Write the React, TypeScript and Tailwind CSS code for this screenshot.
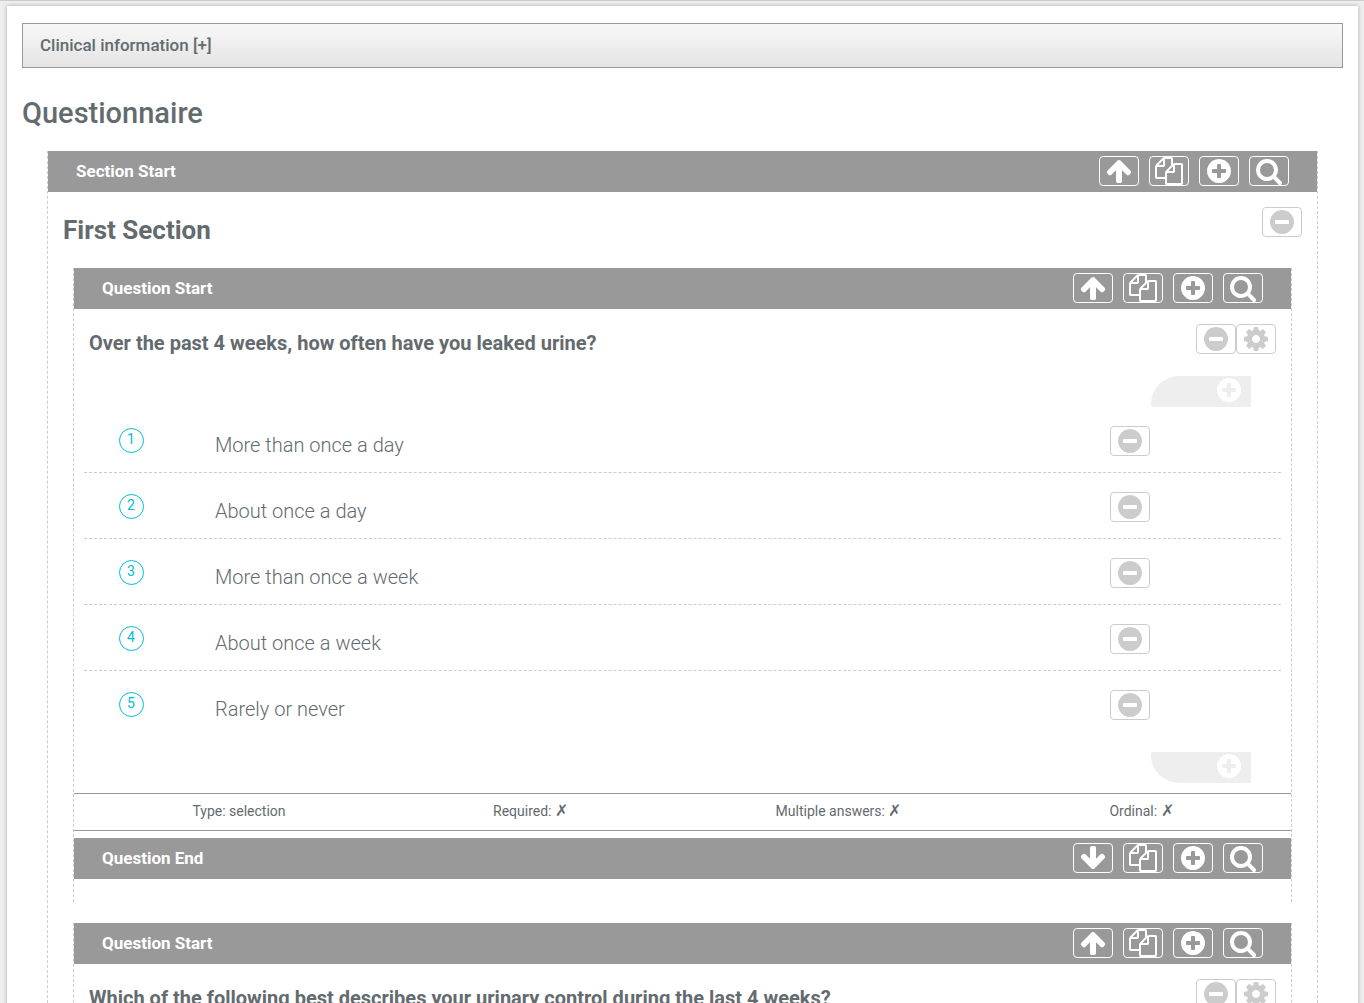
import type { ReactNode } from 'react'

const icons = {
  up: 'M1675 971q0 51-37 90l-75 75q-38 38-91 38-54 0-90-38l-294-293v704q0 52-37.5 84.5t-90.5 32.5h-128q-53 0-90.5-32.5t-37.5-84.5v-704l-294 293q-36 38-90 38t-90-38l-75-75q-38-38-38-90 0-53 38-91l651-651q35-37 90-37 54 0 91 37l651 651q37 39 37 91z',
  copy: 'M1696 384q40 0 68 28t28 68v1216q0 40-28 68t-68 28h-960q-40 0-68-28t-28-68v-288h-544q-40 0-68-28t-28-68v-672q0-40 20-88t48-76l408-408q28-28 76-48t88-20h416q40 0 68 28t28 68v328q68-40 128-40h416zm-544 213l-299 299h299v-299zm-640-384l-299 299h299v-299zm196 647l316-316v-416h-384v416q0 40-28 68t-68 28h-416v640h512v-256q0-40 20-88t48-76zm956 804v-1152h-384v416q0 40-28 68t-68 28h-416v640h896z',
  plus: 'M1344 960v-128q0-26-19-45t-45-19h-256v-256q0-26-19-45t-45-19h-128q-26 0-45 19t-19 45v256h-256q-26 0-45 19t-19 45v128q0 26 19 45t45 19h256v256q0 26 19 45t45 19h128q26 0 45-19t19-45v-256h256q26 0 45-19t19-45zm320-64q0 209-103 385.5t-279.5 279.5-385.5 103-385.5-103-279.5-279.5-103-385.5 103-385.5 279.5-279.5 385.5-103 385.5 103 279.5 279.5 103 385.5z',
  minus: 'M1344 960v-128q0-26-19-45t-45-19h-768q-26 0-45 19t-19 45v128q0 26 19 45t45 19h768q26 0 45-19t19-45zm320-64q0 209-103 385.5t-279.5 279.5-385.5 103-385.5-103-279.5-279.5-103-385.5 103-385.5 279.5-279.5 385.5-103 385.5 103 279.5 279.5 103 385.5z',
  search: 'M1216 832q0-185-131.5-316.5t-316.5-131.5-316.5 131.5-131.5 316.5 131.5 316.5 316.5 131.5 316.5-131.5 131.5-316.5zm512 832q0 52-38 90t-90 38q-54 0-90-38l-343-342q-179 124-399 124-143 0-273.5-55.5t-225-150-150-225-55.5-273.5 55.5-273.5 150-225 225-150 273.5-55.5 273.5 55.5 225 150 150 225 55.5 273.5q0 220-124 399l343 343q37 37 37 90z',
  cog: 'M1152 896q0-106-75-181t-181-75-181 75-75 181 75 181 181 75 181-75 75-181zm512-109v222q0 12-8 23t-20 13l-185 28q-19 54-39 91 35 50 107 138 10 12 10 25t-9 23q-27 37-99 108t-94 71q-12 0-26-9l-138-108q-44 23-91 38-16 136-29 186-7 28-36 28h-222q-14 0-24.5-8.5t-11.5-21.5l-28-184q-49-16-90-37l-141 107q-10 9-25 9-14 0-25-11-126-114-165-168-7-10-7-23 0-12 8-23 15-21 51-66.5t54-70.5q-27-50-41-99l-183-27q-13-2-21-12.5t-8-23.5v-222q0-12 8-23t19-13l186-28q14-46 39-92-40-57-107-138-10-12-10-24 0-10 9-23 26-36 98.5-107.5t94.5-71.5q13 0 26 10l138 107q44-23 91-38 16-136 29-186 7-28 36-28h222q14 0 24.5 8.5t11.5 21.5l28 184q49 16 90 37l142-107q9-9 24-9 13 0 25 10 129 119 165 170 7 8 7 22 0 12-8 23-15 21-51 66.5t-54 70.5q26 50 41 98l183 28q13 2 21 12.5t8 23.5z',
}

type IconName = keyof typeof icons

const Icon = ({ name, className = '' }: { name: IconName; className?: string }) => (
  <svg viewBox="0 0 1792 1792" fill="currentColor" aria-hidden="true" className={`size-7 shrink-0 ${className}`}>
    <path d={icons[name]} />
  </svg>
)

const IconButton = ({ name, label, flip }: { name: IconName; label: string; flip?: boolean }) => (
  <button
    type="button"
    aria-label={label}
    className="flex h-[30px] w-10 shrink-0 items-center justify-center rounded border border-current"
  >
    <Icon name={name} className={flip ? 'rotate-180' : ''} />
  </button>
)

function Bar({ title, end }: { title: string; end?: boolean }) {
  return (
    <div className="flex h-[41px] items-start justify-between bg-[#999] px-7 pt-[5px] text-white">
      <span className="text-[17px] leading-[30px] font-bold">{title}</span>
      <div className="flex gap-2.5">
        <IconButton name="up" label={end ? 'Move down' : 'Move up'} flip={end} />
        <IconButton name="copy" label="Copy" />
        <IconButton name="plus" label="Add" />
        <IconButton name="search" label="Search" />
      </div>
    </div>
  )
}

function AddTab({ bottom }: { bottom?: boolean }) {
  return (
    <div className="flex justify-end pr-10">
      <button
        type="button"
        aria-label="Add answer"
        className={`flex h-[31px] w-[100px] justify-end rounded-xs bg-[#eee] pr-2 text-white ${
          bottom ? 'rounded-bl-[28px]' : 'rounded-tl-[28px]'
        }`}
      >
        <Icon name="plus" />
      </button>
    </div>
  )
}

function Question({ text, children }: { text: string; children?: ReactNode }) {
  return (
    <section className="mx-[25px] border-x border-dashed border-[#ccc] pb-[23px]">
      <Bar title="Question Start" />
      <div className="flex items-start justify-between px-[15px] pt-[15px]">
        <h3 className="pt-[7px] text-xl leading-6 font-bold">{text}</h3>
        <div className="flex text-[#ccc]">
          <IconButton name="minus" label="Remove question" />
          <IconButton name="cog" label="Question settings" />
        </div>
      </div>
      {children}
    </section>
  )
}

const answers = [
  'More than once a day',
  'About once a day',
  'More than once a week',
  'About once a week',
  'Rarely or never',
]

const No = () => (
  <span aria-label="no" className="text-base leading-4">
    ✗
  </span>
)

export default function App() {
  return (
    <div className="h-screen overflow-hidden border-t border-[#ccc] bg-[#eee] px-[7px] pt-[5px] font-[Roboto,sans-serif] text-[#636b6f]">
      <main className="mr-[-1px] min-h-screen bg-white px-[15px] pt-[17px] shadow-[0_0_4px_rgba(0,0,0,0.3)]">
        <button
          type="button"
          className="flex h-[45px] w-full items-center border border-[#999] bg-linear-to-b from-[#f8f8f8] to-[#e4e4e4] px-[17px] text-[17px] font-medium"
        >
          Clinical information [+]
        </button>

        <h1 className="mt-[27px] text-[29px] leading-9 font-medium">Questionnaire</h1>

        <div className="mx-[25px] mt-5 border-x border-dashed border-[#ccc]">
          <Bar title="Section Start" />
          <div className="flex h-[76px] items-start justify-between p-[15px]">
            <h2 className="pt-[7px] text-[26px] leading-8 font-bold">First Section</h2>
            <div className="text-[#ccc]">
              <IconButton name="minus" label="Remove section" />
            </div>
          </div>

          <Question text="Over the past 4 weeks, how often have you leaked urine?">
            <div className="pt-[21px]">
              <AddTab />
            </div>
            <ol className="mx-2.5">
              {answers.map((answer, i) => (
                <li
                  key={answer}
                  className="flex h-[66px] items-center border-b border-dashed border-[#ccc] pt-0.5 pr-[131px] pl-[35px] last:border-transparent"
                >
                  <span className="flex size-[25px] justify-center rounded-full border border-[#00bcd4] pr-px text-sm leading-5 text-[#00bcd4]">
                    {i + 1}
                  </span>
                  <span className="flex-1 pt-2 pl-[71px] text-xl leading-6 font-light">{answer}</span>
                  <span className="text-[#ccc]">
                    <IconButton name="minus" label={`Remove ${answer}`} />
                  </span>
                </li>
              ))}
            </ol>
            <div className="pt-[15px]">
              <AddTab bottom />
            </div>
            <div className="mt-2.5 mb-[7px] grid h-[38px] grid-cols-[330fr_253fr_363fr_271fr] items-center border-y border-[#999] pb-0.5 text-center text-sm">
              <span>Type: selection</span>
              <span>
                Required: <No />
              </span>
              <span>
                Multiple answers: <No />
              </span>
              <span className="pr-7">
                Ordinal: <No />
              </span>
            </div>
            <Bar title="Question End" end />
          </Question>

          <div className="mt-[21px]">
            <Question text="Which of the following best describes your urinary control during the last 4 weeks?" />
          </div>
        </div>
      </main>
    </div>
  )
}
